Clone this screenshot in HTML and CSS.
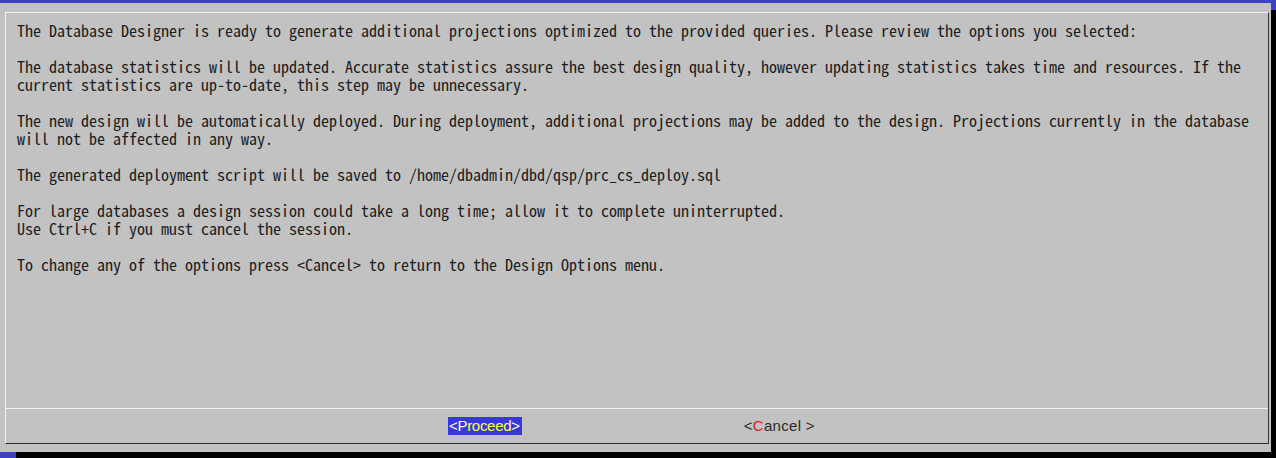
FILE: index.html
```html
<!DOCTYPE html>
<html lang="en">
<head>
  <meta charset="UTF-8" />
  <title>Database Designer</title>
  <link rel="stylesheet" href="styles.css">
</head>
<body>

  <div class="barra-superior"></div>

  <div class="pantalla">
    <div class="dialogo">
      <div class="marco">
        <div class="mensaje">
          <div class="linea">The Database Designer is ready to generate additional projections optimized to the provided queries. Please review the options you selected:</div>
          <div class="linea"></div>
          <div class="linea">The database statistics will be updated. Accurate statistics assure the best design quality, however updating statistics takes time and resources. If the</div>
          <div class="linea">current statistics are up-to-date, this step may be unnecessary.</div>
          <div class="linea"></div>
          <div class="linea">The new design will be automatically deployed. During deployment, additional projections may be added to the design. Projections currently in the database</div>
          <div class="linea">will not be affected in any way.</div>
          <div class="linea"></div>
          <div class="linea">The generated deployment script will be saved to /home/dbadmin/dbd/qsp/prc_cs_deploy.sql</div>
          <div class="linea"></div>
          <div class="linea">For large databases a design session could take a long time; allow it to complete uninterrupted.</div>
          <div class="linea">Use Ctrl+C if you must cancel the session.</div>
          <div class="linea"></div>
          <div class="linea">To change any of the options press &lt;Cancel&gt; to return to the Design Options menu.</div>
        </div>
        <div class="botones">
          <span class="boton activo"><span class="marca">&lt;P</span>roceed<span class="marca">&gt;</span></span>
          <span class="boton">&lt;<span class="tecla">C</span>ancel &gt;</span>
        </div>
      </div>
    </div>
    <div class="sombra"><div class="sombra-azul"></div></div>
  </div>

  <div class="barra-inferior"><div class="esquina"></div></div>

</body>
</html>
```

FILE: styles.css
```css
    body {
      margin: 0;
      width: 1276px;
      height: 458px;
      overflow: hidden;
      background: #000;
      font-family: "Noto Sans Mono CJK JP", "Liberation Mono", monospace;
    }

    .barra-superior {
      height: 3px;
      background: #4040c4;
    }

    .pantalla {
      display: flex;
      height: 449px;
    }

    .dialogo {
      width: 1271px;
      box-sizing: border-box;
      padding: 9px 2px 8px 5px;
      background: #c2c2c2;
    }

    .sombra {
      flex: 1;
      background: #000;
    }

    .sombra-azul {
      height: 7px;
      background: #4040c4;
    }

    .marco {
      height: 432px;
      box-sizing: border-box;
      border-top: 1px solid #f2f2f2;
      border-left: 1px solid #f2f2f2;
      border-right: 1px solid #3a3028;
      border-bottom: 1px solid #2a2a2a;
      display: flex;
      flex-direction: column;
    }

    .mensaje {
      flex: 1;
      padding: 8px 0 0 11px;
      border-bottom: 1px solid #f2f2f2;
      color: #1c1c1c;
      font-size: 16px;
    }

    .linea {
      height: 18px;
      line-height: 18px;
      white-space: pre;
    }

    .botones {
      height: 34px;
      display: flex;
      align-items: center;
      gap: 221px;
      padding-left: 442px;
      font-family: "Liberation Sans", Arial, sans-serif;
      font-size: 15px;
    }

    .boton {
      padding: 0 2px 0 1px;
      line-height: 18px;
      color: #2a2a2a;
      letter-spacing: -0.3px;
    }

    .boton.activo {
      background: #3838d8;
      color: #ffff40;
    }

    .boton.activo .marca {
      color: #fff;
    }

    .boton .tecla {
      color: #e02020;
    }

    .boton + .boton {
      letter-spacing: 0.3px;
    }

    .barra-inferior {
      height: 6px;
      background: #000;
    }

    .esquina {
      width: 16px;
      height: 6px;
      background: #4040c4;
    }
```
